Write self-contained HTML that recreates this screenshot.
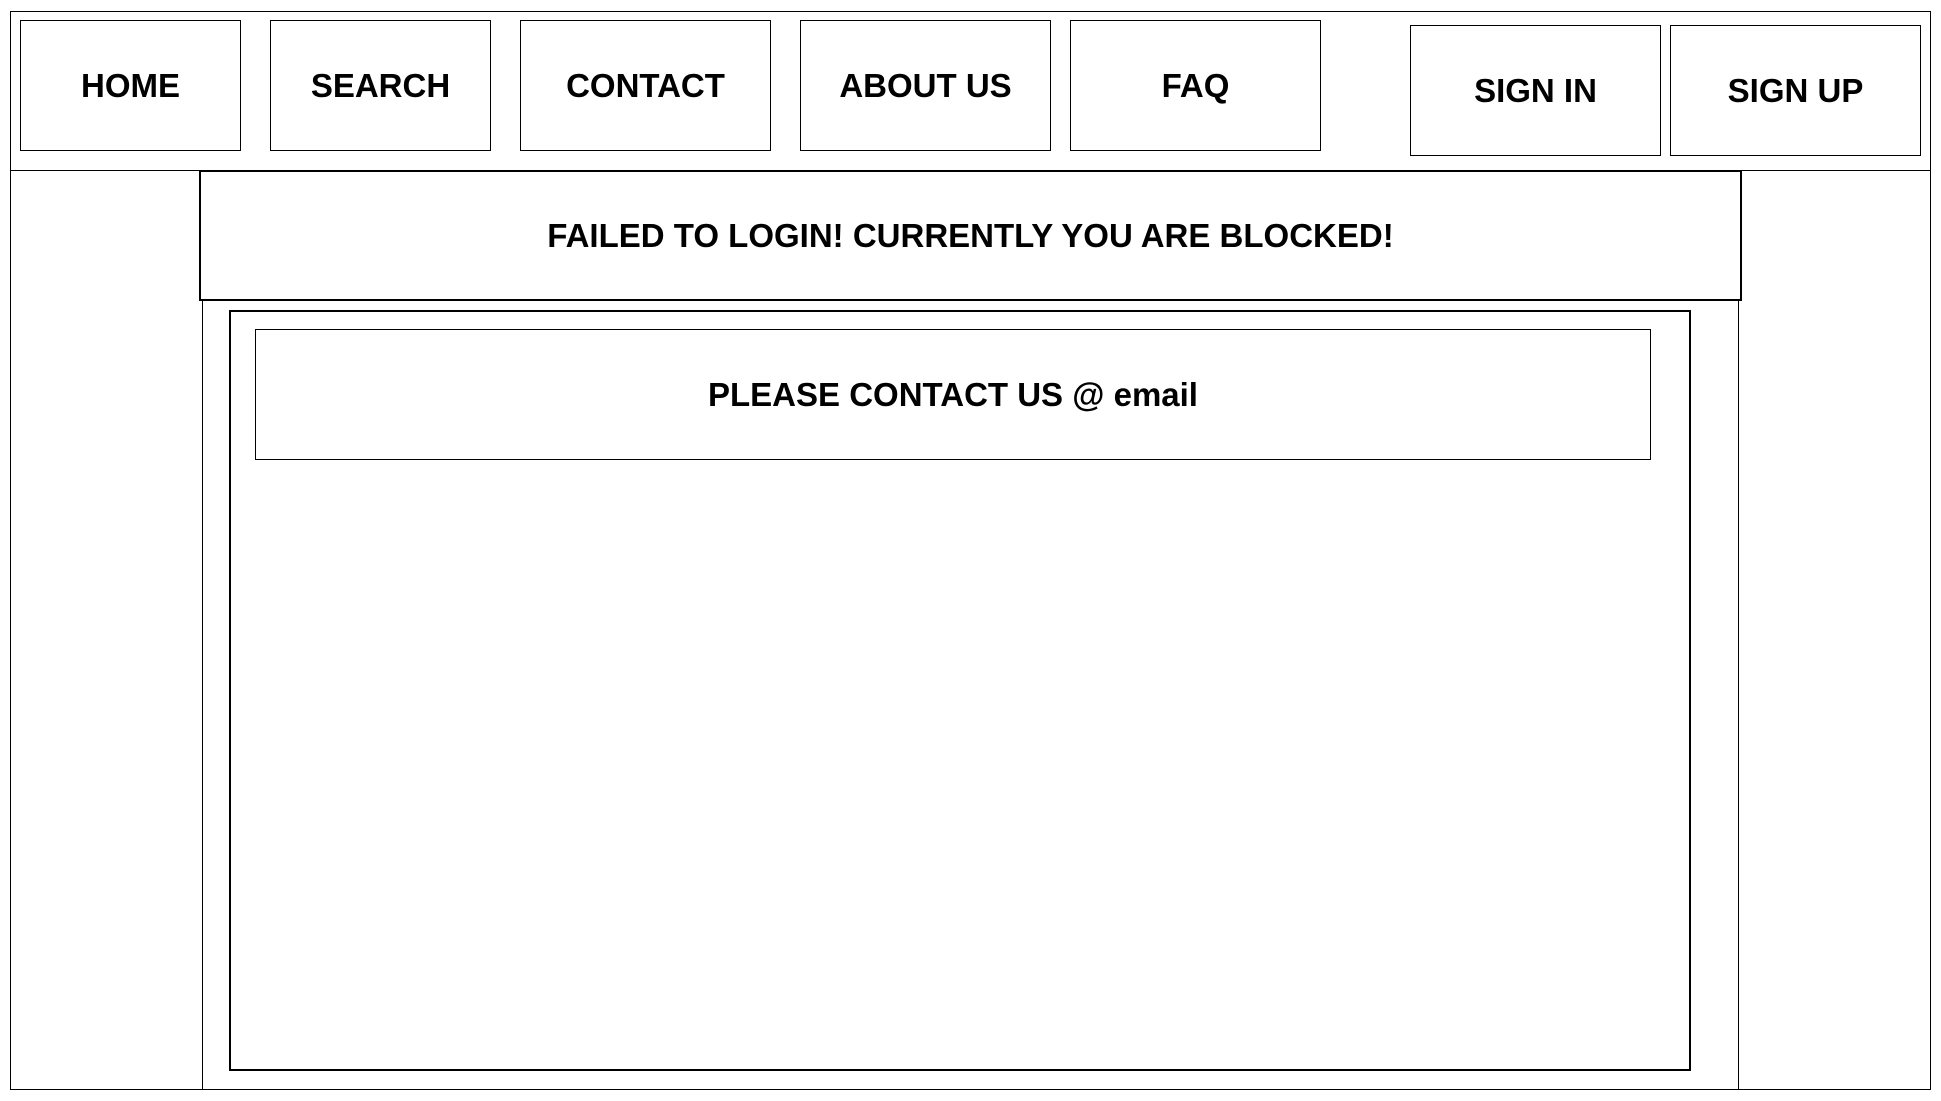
<!DOCTYPE html>
<html><head><style>
body{margin:0;width:1941px;height:1101px;background:#fff;position:relative;overflow:hidden;font-family:"Liberation Sans",Arial,sans-serif;}
.b{position:absolute;box-sizing:border-box;border:1px solid #000;display:flex;align-items:center;justify-content:center;font-weight:bold;font-size:33px;color:#000;}
.l{position:absolute;background:#000;}
</style></head><body>
<div class="b" style="left:10px;top:11px;width:1921px;height:1079px;"></div>
<div class="l" style="left:10px;top:170px;width:1921px;height:1px;"></div>
<div class="l" style="left:202px;top:300px;width:1px;height:790px;"></div>
<div class="l" style="left:1738px;top:300px;width:1px;height:790px;"></div>
<div class="b" style="left:20px;top:20px;width:221px;height:131px;">HOME</div>
<div class="b" style="left:270px;top:20px;width:221px;height:131px;">SEARCH</div>
<div class="b" style="left:520px;top:20px;width:251px;height:131px;">CONTACT</div>
<div class="b" style="left:800px;top:20px;width:251px;height:131px;">ABOUT US</div>
<div class="b" style="left:1070px;top:20px;width:251px;height:131px;">FAQ</div>
<div class="b" style="left:1410px;top:25px;width:251px;height:131px;">SIGN IN</div>
<div class="b" style="left:1670px;top:25px;width:251px;height:131px;">SIGN UP</div>
<div class="b" style="left:199px;top:170px;width:1543px;height:131px;border-width:2px;background:#fff;">FAILED TO LOGIN! CURRENTLY YOU ARE BLOCKED!</div>
<div class="b" style="left:229px;top:310px;width:1462px;height:761px;border-width:2px;"></div>
<div class="b" style="left:255px;top:329px;width:1396px;height:131px;">PLEASE CONTACT US @ email</div>
</body></html>
